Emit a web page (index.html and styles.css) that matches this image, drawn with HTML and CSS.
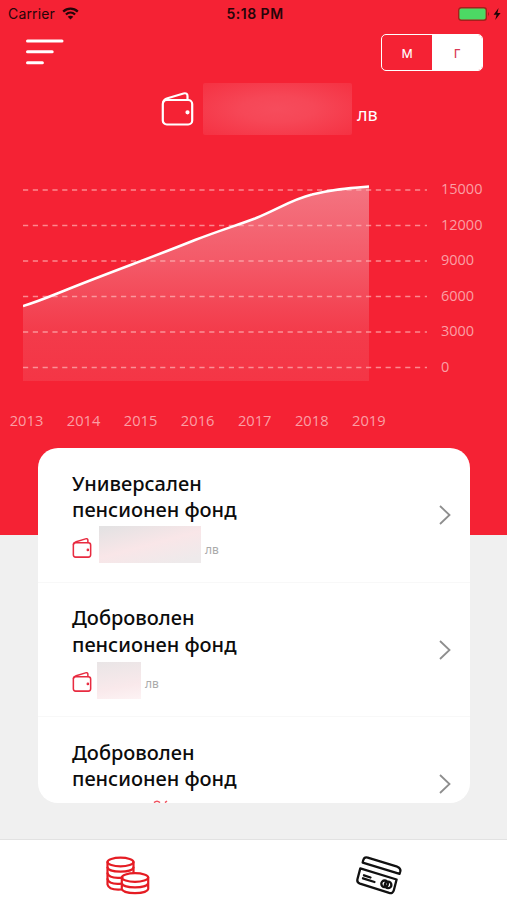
FILE: index.html
```html
<!DOCTYPE html>
<html lang="bg">
<head>
    <meta charset="UTF-8">
    <meta name="viewport" content="width=device-width, initial-scale=1.0">
    <title>Пенсионен фонд</title>
    <link rel="stylesheet" href="styles.css">
</head>
<body>
    <svg class="defs" aria-hidden="true">
        <symbol id="wallet" viewBox="0 0 32 34">
            <rect x="1.3" y="8" width="29.4" height="24.5" rx="4"/>
            <path d="M1.5 10.5 C2 8 3.5 7 6 6.2 L22 1.5 C24.5 .8 26 1.8 26 4 V7.5"/>
            <circle class="dot" cx="26" cy="20.3" r="1"/>
        </symbol>
        <symbol id="chevron" viewBox="0 0 12 20">
            <path d="M1 1 L10.5 10 L1 19"/>
        </symbol>
    </svg>
    <div class="app">
        <header class="hero">
            <div class="status">
                <div class="carrier">
                    <span>Carrier</span>
                    <svg width="17" height="13" viewBox="0 0 17 13">
                        <path d="M1.2 4.6 C5.4 .7 11.6 .7 15.8 4.6 M3.9 7.5 C6.6 5 10.4 5 13.1 7.5" fill="none" stroke="#260509" stroke-width="2.3"/>
                        <path d="M8.5 12.5 L5.7 9.7 C7.3 8.4 9.7 8.4 11.3 9.7 Z" fill="#260509"/>
                    </svg>
                </div>
                <span class="time">5:18 PM</span>
                <div class="battery">
                    <svg width="44" height="14" viewBox="0 0 44 14">
                        <rect x=".7" y=".7" width="27.6" height="12.6" rx="2.5" fill="#4cd964" stroke="#a5201c" stroke-width="1.4"/>
                        <path d="M30 4.5 Q31.6 7 30 9.5 Z" fill="#8b1219"/>
                        <path d="M40.6 1 L35.6 7.8 H38.6 L37.2 13 L42.6 6 H39.4 Z" fill="#1d0507"/>
                    </svg>
                </div>
            </div>
            <div class="toolbar">
                <svg class="menu" width="38" height="26" viewBox="0 0 38 26">
                    <path d="M1.5 2 H36 M1.5 12.8 H26.2 M1.5 23.7 H16.4"/>
                </svg>
                <div class="toggle">
                    <span>м</span>
                    <span class="active">г</span>
                </div>
            </div>
            <div class="total">
                <svg class="icon wallet-big"><use href="#wallet"/></svg>
                <div class="hidden-total"></div>
                <span>лв</span>
            </div>
            <div class="chart">
                <svg width="410" height="210" viewBox="0 0 410 210">
                    <defs>
                        <linearGradient id="area" x1="0" y1="0" x2="0" y2="1">
                            <stop offset="0" stop-color="#f3808c" stop-opacity=".87"/>
                            <stop offset=".4" stop-color="#f3808c" stop-opacity=".58"/>
                            <stop offset=".75" stop-color="#f07a84" stop-opacity=".28"/>
                            <stop offset="1" stop-color="#f07a84" stop-opacity=".22"/>
                        </linearGradient>
                    </defs>
                    <path fill="url(#area)" d="M0 131 C14 127 28 121 43 115 C85 98 130 82 172 65 C195 56 212 51 232 43.5 C255 34 270 24 289 19.5 C310 14 326 13 346 11.5 V206 H0 Z"/>
                    <path class="grid" d="M0 15 H404 M0 50.5 H404 M0 86 H404 M0 121.5 H404 M0 157 H404 M0 192.5 H404"/>
                    <path class="line" d="M0 131 C14 127 28 121 43 115 C85 98 130 82 172 65 C195 56 212 51 232 43.5 C255 34 270 24 289 19.5 C310 14 326 13 346 11.5"/>
                </svg>
                <div class="values">
                    <span>15000</span>
                    <span>12000</span>
                    <span>9000</span>
                    <span>6000</span>
                    <span>3000</span>
                    <span>0</span>
                </div>
            </div>
            <div class="years">
                <span>2013</span>
                <span>2014</span>
                <span>2015</span>
                <span>2016</span>
                <span>2017</span>
                <span>2018</span>
                <span>2019</span>
            </div>
        </header>
        <main class="funds">
            <div class="fund">
                <div>
                    <h2>Универсален<br>пенсионен фонд</h2>
                    <div class="amount">
                        <svg class="icon"><use href="#wallet"/></svg>
                        <div class="hidden-amount wide"></div>
                        <span>лв</span>
                    </div>
                </div>
                <svg class="chevron"><use href="#chevron"/></svg>
            </div>
            <div class="fund">
                <div>
                    <h2>Доброволен<br>пенсионен фонд</h2>
                    <div class="amount">
                        <svg class="icon"><use href="#wallet"/></svg>
                        <div class="hidden-amount narrow"></div>
                        <span>лв</span>
                    </div>
                </div>
                <svg class="chevron"><use href="#chevron"/></svg>
            </div>
            <div class="fund">
                <div>
                    <h2>Доброволен<br>пенсионен фонд</h2>
                    <svg class="peek" width="18" height="3" viewBox="0 0 18 3">
                        <path d="M1 2.6 Q4 0 7 2.6 M12 2.6 L14 1"/>
                    </svg>
                </div>
                <svg class="chevron"><use href="#chevron"/></svg>
            </div>
        </main>
        <nav class="tabs">
            <a>
                <svg class="coins" width="44" height="39" viewBox="0 0 44 39">
                    <path d="M1.5 6 V28.5 C2.5 33 9 34 15.5 33.5 M27.5 6 V17"/>
                    <ellipse cx="14.5" cy="6" rx="13" ry="4.3"/>
                    <path d="M1.5 11.5 C2.5 17 26.5 17 27.5 11.5 M1.5 17.3 C2.5 21.3 9 22.3 16.5 21.6 M1.5 23 C2.5 27 9 28.2 15.5 27.6"/>
                    <ellipse cx="29" cy="21.5" rx="13.2" ry="4.3"/>
                    <path d="M15.8 21.5 V33 C17 38.6 41 38.6 42.2 33 V21.5 M15.8 27.3 C17 32.8 41 32.8 42.2 27.3"/>
                </svg>
            </a>
            <a>
                <svg class="cards" width="46" height="39" viewBox="0 0 46 39">
                    <path d="M6.7 6.6 L7.3 4 C8 1.7 9.5 1 11.7 1.6 L41.2 10.7 C43.8 11.7 44.8 13.1 44.3 15.3 L43.6 17.8 Z"/>
                    <path d="M4.3 12.4 L40.6 23.5 L37.9 34 C37.2 36.7 35.7 37.5 33.2 36.8 L4 27.6 C1.7 26.8 .9 25.3 1.5 23 Z"/>
                    <path d="M8 19.3 L14.5 21.5 M7 22.3 L18.5 26"/>
                    <circle cx="28.6" cy="27.8" r="3.3"/>
                    <circle cx="32.1" cy="28.9" r="3.3"/>
                </svg>
            </a>
        </nav>
    </div>
</body>
</html>
```
FILE: styles.css
```css
* { box-sizing: border-box; }
body { margin: 0; font-family: "Noto Sans", "Open Sans", sans-serif; background: #f0f0f0; }
svg { display: block; }
.defs { display: none; }
.app { display: flex; flex-direction: column; width: 507px; height: 900px; overflow: hidden; }

.hero { flex: none; height: 535px; background: #f52234; color: #fff; }
.status { display: grid; grid-template-columns: 1fr auto 1fr; align-items: center; height: 27px; padding: 0 5px 0 8px; color: #260509; font-family: Inter, sans-serif; font-size: 14px; }
.carrier { display: flex; align-items: center; gap: 7px; letter-spacing: 0.15px; }
.time { font-weight: 600; letter-spacing: 0.5px; }
.battery { display: flex; justify-content: flex-end; }

.toolbar { display: flex; justify-content: space-between; height: 56px; padding: 7px 24px 0 26px; }
.menu { margin-top: 5px; fill: none; stroke: #fff; stroke-width: 3; stroke-linecap: round; }
.toggle { display: flex; width: 102px; height: 37px; border: 1.5px solid #fff; border-radius: 5px; overflow: hidden; font-family: "Open Sans", sans-serif; font-size: 16px; line-height: 35px; text-align: center; }
.toggle span { flex: 1; }
.toggle .active { background: #fff; color: #d93a55; }

.icon { width: 20px; height: 20px; fill: none; stroke: #e82b40; stroke-width: 2.6; stroke-linecap: round; }
.total { display: flex; height: 52px; padding-left: 161px; }
.total .wallet-big { width: 33px; height: 34px; margin: 9px 9px 0 0; stroke: #fff; stroke-width: 2.2; }
.hidden-total { width: 149px; height: 52px; border-radius: 2px; background: radial-gradient(ellipse at center, #f64c5c 0%, #f64757 35%, #f53142 100%); }
.total span { margin: 18px 0 0 5px; font-size: 18px; line-height: 27px; }

.chart { display: flex; height: 266px; padding: 40px 0 0 23px; }
.chart .grid { fill: none; stroke: #ffc0c2; stroke-opacity: 0.65; stroke-width: 1.3; stroke-dasharray: 5.2 4.6; }
.chart .line { fill: none; stroke: #fff; stroke-width: 2.5; }
.values { display: flex; flex-direction: column; margin: -4px 0 0 8px; color: #fb9fa5; font-family: "Open Sans", sans-serif; font-size: 14.5px; line-height: 35.5px; }
.years { display: flex; color: #fb9fa5; font-family: "Open Sans", sans-serif; font-size: 14.7px; line-height: 39px; margin-left: -2px; }
.years span { width: 57.05px; text-align: center; }

.funds { flex: none; width: 432px; height: 355px; margin: -87px 0 0 38px; border-radius: 20px; background: #fff; overflow: hidden; }
.fund { display: flex; justify-content: space-between; align-items: center; height: 134.5px; padding: 0 19px 0 34px; border-bottom: 1px solid #f8f8f8; }
.fund > div { height: 134px; padding-top: 23px; }
.fund h2 { margin: 0; color: #0c0c0c; font-size: 20px; font-weight: 500; line-height: 26.5px; }
.amount { display: flex; height: 40px; padding-top: 2px; color: #aaa; font-size: 12px; }
.amount .icon { margin: 12px 7px 0 0; }
.hidden-amount { width: 44px; height: 37px; background: linear-gradient(170deg, #e9e5e6, #f9e9eb 65%, #fdf3f4); }
.hidden-amount.wide { width: 102px; background: linear-gradient(165deg, #e4e2e3 5%, #f9e6e8 50%, #eeeaeb 90%); }
.hidden-amount.narrow { margin: 2px 0 0 -2px; }
.amount span { margin: 15px 0 0 4px; line-height: 18px; }
.chevron { width: 12px; height: 20px; margin-top: 1px; fill: none; stroke: #8e8e8e; stroke-width: 1.8; }
.peek { margin: 7px 0 0 81px; fill: none; stroke: #f0525f; stroke-width: 1.5; }

.tabs { display: flex; flex: none; height: 61px; margin-top: 36px; border-top: 1.5px solid #e2e2e2; background: #fff; }
.tabs a { display: flex; flex: 1; justify-content: center; padding-top: 16px; }
.tabs svg { fill: none; stroke-linejoin: round; stroke-linecap: round; }
.coins { margin-left: 3px; stroke: #e51c23; stroke-width: 2.2; }
.cards { margin-right: 3px; stroke: #111; stroke-width: 2.3; }
```
